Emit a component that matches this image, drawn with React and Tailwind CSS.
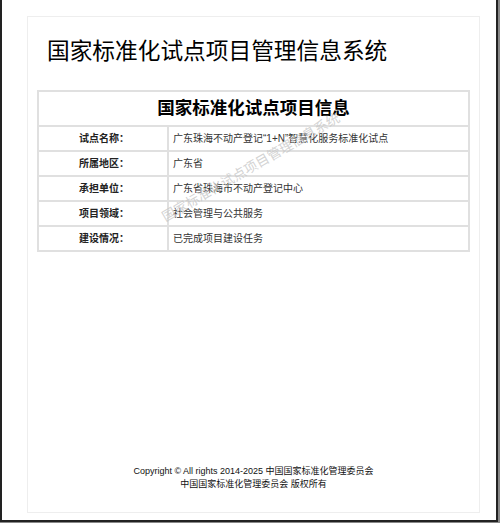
import React from "react";

const rows = [
  ["试点名称：", "广东珠海不动产登记“1+N”智慧化服务标准化试点"],
  ["所属地区：", "广东省"],
  ["承担单位：", "广东省珠海市不动产登记中心"],
  ["项目领域：", "社会管理与公共服务"],
  ["建设情况：", "已完成项目建设任务"],
];

export default function App() {
  return (
    <div
      className="w-[500px] h-[523px] bg-[#888] overflow-hidden"
      style={{ fontFamily: '"Liberation Sans", "Noto Sans CJK SC", sans-serif' }}
    >
      <div className="w-[498px] h-[522px] bg-white border-l-2 border-r-2 border-b-2 border-[#222] pt-[16px] pl-[25px]">
        <div className="relative w-[453px] h-[497px] border border-[#eeeeee] flex flex-col">
          <h1 className="mt-[18px] ml-[19px] text-[22.7px] leading-[32px] text-black font-normal">
            国家标准化试点项目管理信息系统
          </h1>
          <div className="relative mt-[23px] mx-[9px]">
            <table className="w-[433px] border-collapse border-2 border-[#e0e0e0] text-[10px] text-[#222]">
              <tbody>
                <tr>
                  <td colSpan={2} className="h-[35px] border-2 border-[#e0e0e0] text-center text-[17.5px] font-bold text-black">
                    国家标准化试点项目信息
                  </td>
                </tr>
                {rows.map(([k, v]) => (
                  <tr key={k}>
                    <td className="w-[130px] h-[25px] border-2 border-[#e0e0e0] text-center font-bold pl-[2px]">{k}</td>
                    <td className="h-[25px] border-2 border-[#e0e0e0] pl-[4px] text-[#333]">{v}</td>
                  </tr>
                ))}
              </tbody>
            </table>
            <div
              className="pointer-events-none absolute left-[113px] top-[68px] text-[13.5px] text-[#c8c8c8]/80 whitespace-nowrap"
              style={{ transform: "rotate(-30deg)", transformOrigin: "center" }}
            >
              国家标准化试点项目管理信息系统
            </div>
          </div>
          <div className="mt-auto mb-[21px] text-center text-[9px] leading-[13px] text-[#111]">
            <div>Copyright © All rights 2014-2025 中国国家标准化管理委员会</div>
            <div>中国国家标准化管理委员会 版权所有</div>
          </div>
        </div>
      </div>
    </div>
  );
}
